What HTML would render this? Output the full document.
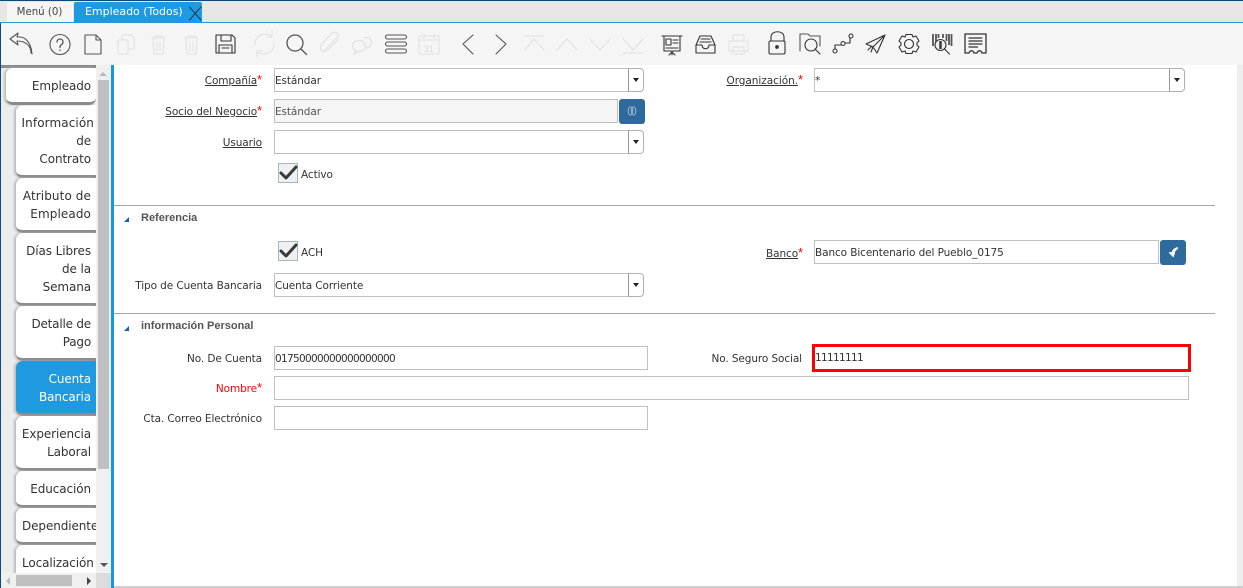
<!DOCTYPE html>
<html><head><meta charset="utf-8"><style>
html,body{margin:0;padding:0;width:1243px;height:588px;overflow:hidden;background:#fff}
body{font-family:"DejaVu Sans","Liberation Sans",sans-serif;font-size:11px;color:#333;position:relative}
div,span,u{box-sizing:border-box}
.a{position:absolute}
.l{position:absolute;white-space:nowrap;text-align:right;line-height:14px;font-size:10.5px;letter-spacing:-.1px;margin-top:1px}
.l i{color:#f00;font-style:normal;font-family:"Liberation Sans",sans-serif;font-size:13px;line-height:10px}
.f{position:absolute;border:1.5px solid #c0c0c0;background:#fff;height:24px;line-height:24px;padding-left:0;font-size:10.5px;letter-spacing:-.1px;white-space:nowrap;color:#333}
.dd{position:absolute;width:16px;height:24px;background:#fff;border:1.5px solid #b0b0b0;border-left-color:#999;border-radius:0 4px 4px 0}
.dd:after{content:"";position:absolute;left:3.5px;top:9px;border:3.5px solid transparent;border-top:4px solid #222;border-bottom:0}
.b{position:absolute;width:26px;height:25px;background:#2f6a9c;border-radius:3px}
.cb{position:absolute;width:20px;height:20px;background:#eef0f2;border:1px solid #aab4bd}
.t{position:absolute;background:#fff;border-radius:7px 0 0 7px;border-bottom:3px solid #8b8b8b;box-shadow:-2px 0 2px #bbb;text-align:right;padding-right:5px;padding-top:9px;font-size:12px;line-height:18px;overflow:hidden;white-space:nowrap;color:#333;letter-spacing:-.1px}
.t.sel{background:#1f9ae0;color:#fff}
.h{position:absolute;height:1px;background:#a8a8a8;left:114px;width:1101px}
.sec{position:absolute;left:141px;font:bold 11px "Liberation Sans",sans-serif;color:#555;line-height:14px;margin-top:1px}
.tri{position:absolute;left:124px;width:0;height:0;border-left:5px solid transparent;border-bottom:5px solid #1560b8}
</style></head><body>
<div class="a" style="left:0;top:0;width:1243px;height:23px;background:#e6e6e6"></div>
<div class="a" style="left:0;top:0;width:1243px;height:1px;background:#0a4a80"></div>
<div class="a" style="left:7px;top:2px;width:66px;height:20px;background:#f5f5f5;border-right:1px solid #fff;text-align:center;line-height:21px;font-size:10.2px;color:#444">Menú (0)</div>
<div class="a" style="left:74px;top:2px;width:128px;height:20px;background:#1f9ae0;color:#fff;padding-left:11px;line-height:20px;font-size:11px;letter-spacing:-.02px;border-radius:2px 2px 0 0">Empleado (Todos)</div>
<div class="a" style="left:0;top:22px;width:1243px;height:1.5px;background:#1f9ae0"></div>
<div class="a" style="left:0;top:23px;width:1243px;height:42px;background:#f5f5f5"></div>

<!-- left panel -->
<div class="a" style="left:0;top:65px;width:111px;height:523px;background:#ececec"></div>
<div class="a" style="left:1px;top:65px;width:95px;height:3px;background:#8b8b8b"></div>
<div class="a" style="left:96px;top:65px;width:15px;height:523px;background:#f0f0f0"></div>
<div class="a" style="left:98px;top:80px;width:11px;height:389px;background:#c0c0c0"></div>
<div class="a" style="left:99px;top:72px;border:4.5px solid transparent;border-bottom:4px solid #bbb;border-top:0;width:0;height:0"></div>
<div class="a" style="left:100px;top:563px;border:4px solid transparent;border-top:4px solid #555;border-bottom:0;width:0;height:0"></div>

<div class="t" style="left:6px;top:68px;width:90px;height:37px;border-radius:7px 0 7px 7px;z-index:2">Empleado</div>
<div class="t" style="left:16px;top:105px;width:80px;height:73px;padding-right:2px"><span style="letter-spacing:.1px">Información</span><br><span style="padding-right:3px">de</span><br><span style="padding-right:3px">Contrato</span></div>
<div class="t" style="left:16px;top:178px;width:80px;height:55px;letter-spacing:.1px">Atributo de<br>Empleado</div>
<div class="t" style="left:16px;top:233px;width:80px;height:73px">Días Libres<br>de la<br>Semana</div>
<div class="t" style="left:16px;top:306px;width:80px;height:55px;letter-spacing:-.2px">Detalle de<br>Pago</div>
<div class="t sel" style="left:16px;top:361px;width:80px;height:55px">Cuenta<br>Bancaria</div>
<div class="t" style="left:16px;top:416px;width:80px;height:55px">Experiencia<br>Laboral</div>
<div class="t" style="left:16px;top:471px;width:80px;height:37px">Educación</div>
<div class="t" style="left:16px;top:508px;width:80px;height:37px;padding-right:0;text-align:left;padding-left:6px">Dependientes</div>
<div class="t" style="left:16px;top:545px;width:80px;height:30px;padding-right:0;text-align:left;padding-left:6px;border-bottom:0;border-radius:7px 0 0 0">Localización</div>
<div class="a" style="left:1px;top:573px;width:110px;height:15px;background:#f0f0f0"></div>
<div class="a" style="left:96px;top:573px;width:15px;height:15px;background:#dcdcdc"></div>
<div class="a" style="left:16px;top:575px;width:56px;height:11px;background:#c0c0c0"></div>
<div class="a" style="left:6px;top:577px;border:4px solid transparent;border-right:4px solid #bbb;border-left:0;width:0;height:0"></div>
<div class="a" style="left:87px;top:577px;border:4px solid transparent;border-left:4px solid #444;border-right:0;width:0;height:0"></div>

<div class="a" style="left:0;top:23px;width:1px;height:565px;background:#0a4a80"></div>
<div class="a" style="left:111px;top:65px;width:3px;height:523px;background:#0d9ce0"></div>
<div class="a" style="left:1237px;top:65px;width:6px;height:523px;background:#eeeeee"></div>
<div class="a" style="left:114px;top:586px;width:1129px;height:2px;background:#cfcfcf"></div>

<!-- form -->
<div class="l" style="right:981px;top:73px"><u>Compañía</u><i>*</i></div>
<div class="f" style="left:274px;top:68px;width:355px">Estándar</div><div class="dd" style="left:628px;top:68px"></div>
<div class="l" style="right:981px;top:104px"><u>Socio del Negocio</u><i>*</i></div>
<div class="f" style="left:274px;top:99px;width:344px;background:#f5f5f5;color:#555">Estándar</div>
<div class="b" style="left:619px;top:99px"></div>
<div class="l" style="right:981px;top:135px"><u>Usuario</u></div>
<div class="f" style="left:274px;top:130px;width:355px"></div><div class="dd" style="left:628px;top:130px"></div>
<div class="cb" style="left:278px;top:163px"></div>
<div class="l" style="left:301px;top:167px">Activo</div>
<div class="h" style="top:205px"></div>
<div class="tri" style="top:217px"></div><div class="sec" style="top:210px">Referencia</div>
<div class="cb" style="left:278px;top:241px"></div>
<div class="l" style="left:301px;top:245px">ACH</div>
<div class="l" style="right:981px;top:278px">Tipo de Cuenta Bancaria</div>
<div class="f" style="left:274px;top:273px;width:355px">Cuenta Corriente</div><div class="dd" style="left:628px;top:273px"></div>
<div class="h" style="top:313px"></div>
<div class="tri" style="top:326px"></div><div class="sec" style="top:318px">información Personal</div>
<div class="l" style="right:981px;top:351px">No. De Cuenta</div>
<div class="f" style="left:274px;top:346px;width:374px;letter-spacing:-.68px">01750000000000000000</div>
<div class="l" style="right:981px;top:381px;color:#f00">Nombre<i>*</i></div>
<div class="f" style="left:274px;top:376px;width:915px"></div>
<div class="l" style="right:981px;top:411px">Cta. Correo Electrónico</div>
<div class="f" style="left:274px;top:406px;width:374px"></div>

<div class="l" style="right:440px;top:73px;letter-spacing:-.05px"><u>Organización.</u><i>*</i></div>
<div class="f" style="left:814px;top:68px;width:356px">*</div><div class="dd" style="left:1169px;top:68px"></div>
<div class="l" style="right:440px;top:246px"><u>Banco</u><i>*</i></div>
<div class="f" style="left:814px;top:240px;width:345px">Banco Bicentenario del Pueblo_0175</div>
<div class="b" style="left:1160px;top:240px"></div>
<div class="l" style="right:441px;top:351px">No. Seguro Social</div>
<div class="f" style="left:812px;top:344px;width:379px;height:28px;border:3px solid #f00;line-height:23px;padding-left:0;letter-spacing:-.68px">11111111</div>

<svg class="a" style="left:0;top:0" width="1243" height="588" viewBox="0 0 1243 588" fill="none" stroke-linecap="round" stroke-linejoin="round">
<!-- tab close -->
<path d="M189.500 7L201 20M201 7L189.500 20" stroke="#123" stroke-width=".9"/>
<g stroke="#555" stroke-width="1.100">
<!-- undo -->
<path d="M31 53C31 45 25 41 17 41L18 45L10 39L18 33L17 37C24 36 31 41 32 54"/>
<!-- help -->
<circle cx="60" cy="44.500" r="10"/>
<path d="M57 42C57 38 63 38 63 42C63 45 60 44 60 47.500" stroke-width="1.300"/><path d="M60 50v.5" stroke-width="1.300"/>
<!-- new -->
<path d="M85 35H96L101 40V54H85ZM96 35V40H101"/>
<!-- save -->
<path d="M216 35H232L235 38V53H216Z" stroke="#333"/><path d="M221 35V41H231V35M219 53V45H232V53M222 48H229" stroke="#333"/>
<!-- search -->
<circle cx="295" cy="43" r="8" stroke-width="1.300"/><path d="M301 49L306.500 54.500" stroke-width="1.300"/>
<!-- menu -->
<rect x="385.500" y="35" width="21" height="4" rx="2"/><rect x="385.500" y="42" width="21" height="4" rx="2"/><rect x="385.500" y="49" width="21" height="4" rx="2"/>
<!-- nav -->
<path d="M473 35L463 44L473 54M496 35L506 44L496 54"/>
</g>
<g stroke="#e0e0e0" stroke-width="1.100">
<!-- copy -->
<path d="M118 40H128V54H118ZM122 40V35H131L134 38V49H128"/>
<!-- delete -->
<path d="M152 38H165M155 38V36H162V38M153 39L154 54H163L164 39M157 42V51M160 42V51"/>
<path d="M185 38H198M188 38V36H195V38M186 39L187 54H196L197 39M190 42V51M193 42V51"/>
<!-- refresh -->
<path d="M255 45C254 36 264 31 272 36M274 43C275 52 265 57 257 52M272 31V37H267M257 57V51H262"/>
<!-- attach -->
<path d="M323 52L337 38C341 33 334 30 331 34L322 44C318 49 323 54 328 50L338 40"/>
<!-- chat -->
<ellipse cx="359" cy="46" rx="6.500" ry="5.500"/><path d="M364 38C369 36 373 40 371 44C370 47 368 48 366 48M355 51L354 54L358 52"/>
<!-- calendar -->
<rect x="419" y="36" width="20" height="18"/><path d="M419 40H439M424 34V38M434 34V38"/>
<!-- first, up, down, last -->
<path d="M524 36H544M525 50L534 39L544 50M557 50L567 39L577 50M590 39L600 50L610 39M623 39L633 50L643 39M623 53H643"/>
<!-- printer -->
<path d="M733 40V35H744V40M729 51V41H748V51ZM733 47H744V54H733Z"/>
</g>
<text x="429" y="52" font-family="Liberation Sans" font-size="9" fill="#dcdcdc" text-anchor="middle">31</text>
<g stroke="#333" stroke-width="1.100">
<!-- presentation -->
<path d="M662 36H682M664 36V51H680V36M672 51V55M669 55L672 52L675 55"/>
<rect x="666" y="39" width="5" height="6"/><path d="M673 40H678M673 43H678M666 48H678"/>
<!-- tray -->
<path d="M696 45L700 36H711L715 45V53H696ZM696 45H702C702 50 709 50 709 45H715M701 39H710M700 42H711"/>
<!-- lock -->
<path d="M771 41V37C771 30 784 30 784 37V41"/><rect x="769" y="41" width="16" height="13" rx="1.500"/><circle cx="777" cy="47" r="1.300" fill="#333"/>
<!-- folder search -->
<path d="M800 51V34H808L810 36H820V46" stroke="#555"/><circle cx="811" cy="45" r="6"/><path d="M815 49L820 54" />
<!-- workflow -->
<circle cx="835" cy="51" r="2"/><circle cx="843" cy="43.500" r="2"/><circle cx="851" cy="36" r="2"/>
<path d="M835 49V45H841M845 43H850V38"/>
<!-- send -->
<path d="M866 44L885 35L877 53L873 47ZM885 35L873 47L871 52M868 50L872 46" />
<!-- gear -->
<circle cx="909" cy="44" r="4.500"/>
<path d="M906 34.500H912L913 37L916 36L919 41L917 43V45L919 47L916 52L913 51L912 53.500H906L905 51L902 52L899 47L901 45V43L899 41L902 36L905 37Z"/>
<!-- barcode -->
<path d="M933 34V46M936 34V42M938.500 34V38M943 34V38M946.500 34V41M949 34V45M951.500 34V46" stroke="#555" stroke-width="1.800" stroke-linecap="butt"/><circle cx="940.500" cy="45" r="5.500" fill="#eee"/><path d="M944.500 49L949.500 54"/><path d="M940.500 41V49" stroke-width="2.400" stroke-linecap="butt"/>
<!-- receipt -->
<path d="M965 34H986V53H982C981 50 978 50 977 53H974C973 50 970 50 969 53H965Z" stroke-width="1.300"/>
<path d="M968.500 38H982.500M968.500 41H982.500M968.500 44H982.500M968.500 47H978" stroke-width="1.500" stroke="#555" stroke-linecap="butt"/>
</g>
<!-- checks -->
<path d="M281 173L286 178L296 167" stroke="#3a3a3a" stroke-width="3"/>
<path d="M281 251L286 256L296 245" stroke="#3a3a3a" stroke-width="3"/>
<!-- button icons -->
<ellipse cx="630.500" cy="111" rx="2.300" ry="4.200" stroke="#a8c4dc" stroke-width=".9"/><ellipse cx="633.500" cy="111" rx="2.300" ry="4.200" stroke="#a8c4dc" stroke-width=".9"/>
<path d="M1178 247C1174 248 1172 250 1172 252L1168.500 252.500L1173.500 257.500L1175 253C1175 251 1176 250 1178 249Z" fill="#fff"/>
</svg>
</body></html>
